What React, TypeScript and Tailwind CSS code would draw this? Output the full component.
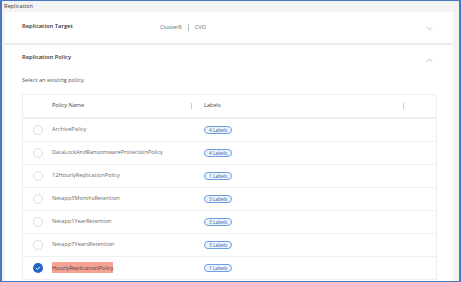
import React from "react";

const rows = [
  { name: "ArchivePolicy", labels: "4 Labels" },
  { name: "DataLockAndRansomwareProtectionPolicy", labels: "4 Labels" },
  { name: "12HourlyReplicationPolicy", labels: "1 Labels" },
  { name: "Netapp3MonthsRetention", labels: "3 Labels" },
  { name: "Netapp1YearRetention", labels: "3 Labels" },
  { name: "Netapp7YearsRetention", labels: "3 Labels" },
  { name: "HourlyReplicationPolicy", labels: "1 Labels", checked: true },
];

function Chevron({ up }: { up?: boolean }) {
  return (
    <svg width="7" height="5" viewBox="0 0 7 5" className="block">
      <path
        d={up ? "M0.5 4 L3.5 1 L6.5 4" : "M0.5 1 L3.5 4 L6.5 1"}
        fill="none"
        stroke="#b8b8b8"
        strokeWidth="0.8"
      />
    </svg>
  );
}

function Radio({ checked }: { checked?: boolean }) {
  if (checked) {
    return (
      <svg width="10" height="10" viewBox="0 0 10 10" className="block">
        <circle cx="5" cy="5" r="5" fill="#1f62c9" />
        <path d="M2.9 5.1 L4.4 6.5 L7.1 3.6" fill="none" stroke="#fff" strokeWidth="1" />
      </svg>
    );
  }
  return (
    <svg width="10" height="10" viewBox="0 0 10 10" className="block">
      <circle cx="5" cy="5" r="4.5" fill="#fff" stroke="#d4d4d4" strokeWidth="0.8" />
    </svg>
  );
}

export default function App() {
  return (
    <div
      className="w-[461px] h-[282px] overflow-hidden bg-[#f3f3f3] border-t border-b border-l-2 border-r-2 border-[#4a76c6] flex flex-col"
      style={{ fontFamily: '"Open Sans", "Noto Sans", sans-serif' }}
    >
      <div className="h-[11px] shrink-0 flex items-center pl-[2px] text-[5.6px] text-[#333] leading-none">
        Replication
      </div>
      <div className="ml-[3px] mr-[6px] flex-1 flex flex-col bg-white">
        <div className="h-[33px] shrink-0 flex items-center pl-[17px] pr-[20px] border-b-2 border-[#ebebeb]">
          <div className="w-[138px] text-[5.8px] font-semibold text-[#333] leading-none -mt-[1px]">
            Replication Target
          </div>
          <div className="flex items-center text-[5.6px] text-[#666] leading-none">
            <span>Cluster8</span>
            <span className="mx-[6px] w-px h-[7px] bg-[#bbb]" />
            <span>CVO</span>
          </div>
          <div className="ml-auto mt-[2px]">
            <Chevron />
          </div>
        </div>
        <div className="flex flex-col pl-[17px] pr-[16px]">
          <div className="h-[26px] shrink-0 flex items-center pr-[4px]">
            <div className="text-[5.8px] font-semibold text-[#333] leading-none">
              Replication Policy
            </div>
            <div className="ml-auto mt-[5px]">
              <Chevron up />
            </div>
          </div>
          <div className="h-[19px] shrink-0 flex items-center pt-[1px] text-[5.6px] text-[#555] leading-none">
            Select an existing policy.
          </div>
          <div className="mt-[4px] border border-[#efefef] border-b-0">
            <div className="h-[24px] flex items-center border-b-2 border-[#efefef] text-[5.6px] text-[#444] leading-none">
              <div className="w-[29px]" />
              <div className="w-[139px]">Policy Name</div>
              <div className="w-px h-[6px] bg-[#ccc]" />
              <div className="w-[12px]" />
              <div className="w-[199px]">Labels</div>
              <div className="w-px h-[6px] bg-[#ccc]" />
            </div>
            {rows.map((r) => (
              <div
                key={r.name}
                className="h-[23px] flex items-center border-b border-[#efefef] text-[5.6px] text-[#6a6a6a] leading-none"
              >
                <div className="w-[29px] flex justify-center pl-[1px]">
                  <Radio checked={r.checked} />
                </div>
                <div className="w-[152px]">
                  {r.checked ? (
                    <span className="bg-[#f6a394] text-[#444] py-[1.5px]">{r.name}</span>
                  ) : (
                    r.name
                  )}
                </div>
                <div className="h-[8px] px-[4px] flex items-center rounded-full border border-[#6e9ee0] bg-[#eef4fd] text-[4.8px] text-[#2d5fae]">
                  {r.labels}
                </div>
              </div>
            ))}
          </div>
        </div>
      </div>
    </div>
  );
}
